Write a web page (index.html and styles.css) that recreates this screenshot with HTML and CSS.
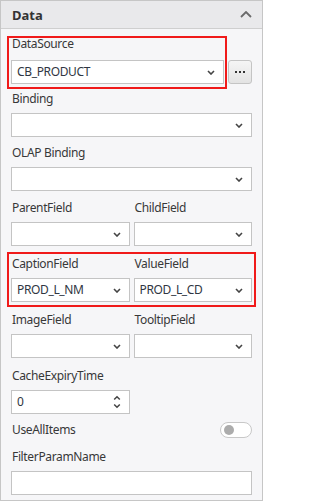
FILE: index.html
```html
<!DOCTYPE html>
<html>
<head>
<meta charset="utf-8">
<link rel="stylesheet" href="styles.css">
</head>
<body>
<div class="panel">
  <div class="panel-header">
    <span class="panel-title">Data</span>
    <svg class="collapse" width="12" height="7" viewBox="0 0 12 7"><path d="M1 6l5-5 5 5" stroke="#6a6a6a" stroke-width="1.8" fill="none"/></svg>
  </div>
  <div class="panel-body">
    <div class="field first">
      <div class="label label-wide">DataSource</div>
      <div class="with-btn">
        <div class="select"><span class="value">CB_PRODUCT</span><svg class="caret" width="8" height="5" viewBox="0 0 8 5"><path d="M1 1l3 3 3-3" stroke="#444" stroke-width="1.6" fill="none"/></svg></div>
        <div class="more-btn"><i></i><i></i><i></i></div>
      </div>
    </div>
    <div class="field g7">
      <div class="label">Binding</div>
      <div class="select"><span class="value"></span><svg class="caret" width="8" height="5" viewBox="0 0 8 5"><path d="M1 1l3 3 3-3" stroke="#444" stroke-width="1.6" fill="none"/></svg></div>
    </div>
    <div class="field g8">
      <div class="label">OLAP Binding</div>
      <div class="select"><span class="value"></span><svg class="caret" width="8" height="5" viewBox="0 0 8 5"><path d="M1 1l3 3 3-3" stroke="#444" stroke-width="1.6" fill="none"/></svg></div>
    </div>
    <div class="pair g9">
      <div class="field">
        <div class="label">ParentField</div>
        <div class="select"><span class="value"></span><svg class="caret" width="8" height="5" viewBox="0 0 8 5"><path d="M1 1l3 3 3-3" stroke="#444" stroke-width="1.6" fill="none"/></svg></div>
      </div>
      <div class="field">
        <div class="label">ChildField</div>
        <div class="select"><span class="value"></span><svg class="caret" width="8" height="5" viewBox="0 0 8 5"><path d="M1 1l3 3 3-3" stroke="#444" stroke-width="1.6" fill="none"/></svg></div>
      </div>
    </div>
    <div class="pair g10">
      <div class="field">
        <div class="label">CaptionField</div>
        <div class="select"><span class="value">PROD_L_NM</span><svg class="caret" width="8" height="5" viewBox="0 0 8 5"><path d="M1 1l3 3 3-3" stroke="#444" stroke-width="1.6" fill="none"/></svg></div>
      </div>
      <div class="field">
        <div class="label">ValueField</div>
        <div class="select"><span class="value">PROD_L_CD</span><svg class="caret" width="8" height="5" viewBox="0 0 8 5"><path d="M1 1l3 3 3-3" stroke="#444" stroke-width="1.6" fill="none"/></svg></div>
      </div>
    </div>
    <div class="pair g10">
      <div class="field">
        <div class="label">ImageField</div>
        <div class="select"><span class="value"></span><svg class="caret" width="8" height="5" viewBox="0 0 8 5"><path d="M1 1l3 3 3-3" stroke="#444" stroke-width="1.6" fill="none"/></svg></div>
      </div>
      <div class="field">
        <div class="label">TooltipField</div>
        <div class="select"><span class="value"></span><svg class="caret" width="8" height="5" viewBox="0 0 8 5"><path d="M1 1l3 3 3-3" stroke="#444" stroke-width="1.6" fill="none"/></svg></div>
      </div>
    </div>
    <div class="pair g10">
      <div class="field">
        <div class="label">CacheExpiryTime</div>
        <div class="select"><span class="value">0</span>
          <svg class="spin" width="8" height="14" viewBox="0 0 8 14"><path d="M1.2 4.5l2.8-2.8 2.8 2.8M1.2 9.5l2.8 2.8 2.8-2.8" stroke="#444" stroke-width="1.5" fill="none"/></svg>
        </div>
      </div>
    </div>
    <div class="toggle-row g8">
      <span class="label">UseAllItems</span>
      <span class="toggle"><i></i></span>
    </div>
    <div class="field g11">
      <div class="label">FilterParamName</div>
      <div class="select"><span class="value"></span></div>
    </div>
  </div>
  <div class="highlight hl-source"></div>
  <div class="highlight hl-caption"></div>
</div>
</body>
</html>
```
FILE: styles.css
```css
html, body {
  margin: 0;
  padding: 0;
  background: #ffffff;
}
body {
  font-family: "Noto Sans", "Open Sans", sans-serif;
  font-size: 12px;
  letter-spacing: -0.35px;
  color: #333;
}
.panel {
  position: relative;
  width: 263px;
  box-sizing: border-box;
  border: 1px solid #c6c6c6;
  background: #f6f6f8;
}
.panel-header {
  height: 28px;
  box-sizing: border-box;
  display: flex;
  align-items: center;
  justify-content: space-between;
  padding: 0 10px 0 11px;
  background: #e9e9eb;
  border-bottom: 1px solid #cfcfcf;
}
.panel-title {
  font-weight: bold;
  font-size: 13px;
  letter-spacing: 0;
  color: #333;
  padding-top: 1px;
}
.collapse {
  display: block;
}
.panel-body {
  padding: 7px 10px 5px 10px;
}
.label {
  display: block;
  height: 16px;
  line-height: 16px;
  margin-bottom: 6px;
  padding-left: 1px;
  white-space: nowrap;
  color: #383838;
}
.label-wide {
  margin-bottom: 8px;
}
.select {
  height: 24px;
  box-sizing: border-box;
  border: 1px solid #c4c4c4;
  background: #fff;
  display: flex;
  align-items: center;
  justify-content: space-between;
  padding: 0 8px 0 5px;
}
.value {
  color: #303642;
  line-height: 16px;
}
.caret, .spin {
  display: block;
  flex: none;
}
.with-btn {
  display: flex;
  gap: 4px;
}
.with-btn .select {
  flex: 1;
}
.more-btn {
  width: 24px;
  height: 24px;
  box-sizing: border-box;
  border: 1px solid #c4c4c4;
  border-radius: 3px;
  background: linear-gradient(#f5f5f5, #e3e3e3);
  display: flex;
  align-items: center;
  justify-content: center;
  gap: 2px;
  flex: none;
}
.more-btn i {
  width: 2px;
  height: 2px;
  background: #333;
}
.pair {
  display: grid;
  grid-template-columns: 1fr 1fr;
  gap: 4px;
}
.g7 { margin-top: 7px; }
.g8 { margin-top: 8px; }
.g9 { margin-top: 9px; }
.g10 { margin-top: 10px; }
.g11 { margin-top: 11px; }
.toggle-row {
  display: flex;
  align-items: center;
  justify-content: space-between;
  height: 16px;
}
.toggle-row .label {
  margin: 0;
}
.toggle {
  width: 32px;
  height: 16px;
  box-sizing: border-box;
  border: 1px solid #c8c8c8;
  border-radius: 8px;
  background: #fff;
  display: flex;
  align-items: center;
  padding-left: 3px;
}
.toggle i {
  width: 10px;
  height: 10px;
  border-radius: 50%;
  background: #acacac;
}
.highlight {
  position: absolute;
  box-sizing: border-box;
  border: 2px solid #f01a1a;
  pointer-events: none;
}
.hl-source {
  left: 6px;
  top: 35px;
  width: 220px;
  height: 53px;
}
.hl-caption {
  left: 6px;
  top: 251px;
  width: 249px;
  height: 55px;
}
```
